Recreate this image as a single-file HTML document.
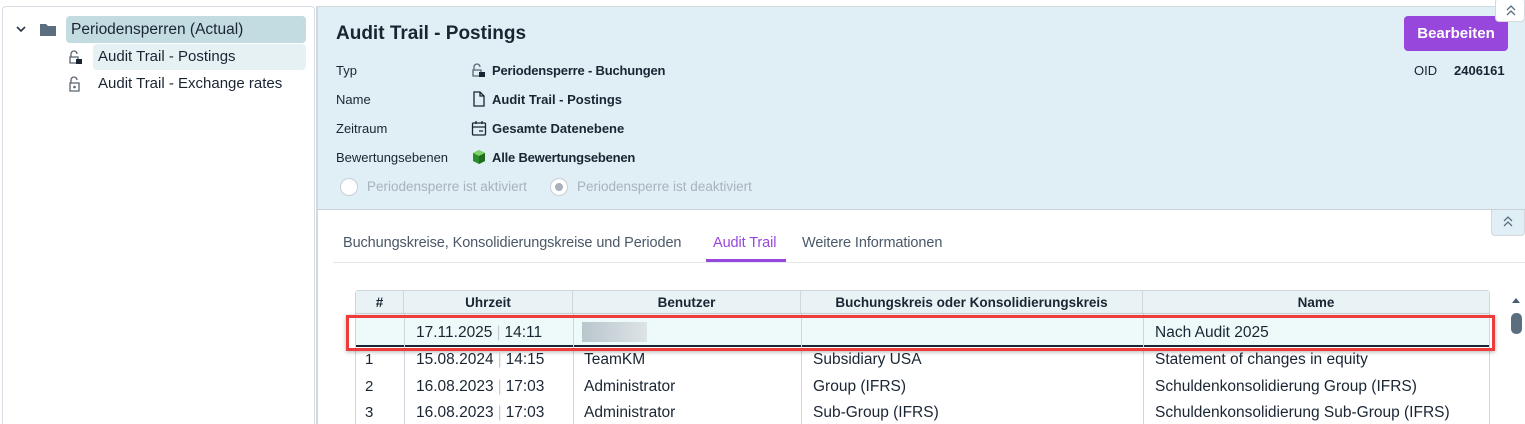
<!DOCTYPE html><html><head><meta charset="utf-8"><style>
*{box-sizing:border-box;margin:0;padding:0}
html,body{width:1525px;height:424px;overflow:hidden}
body{background:#fff;font-family:"Liberation Sans",sans-serif;color:#1a2533;position:relative}
.a{position:absolute;white-space:nowrap}
.b{font-weight:bold}
.lbl{font-size:13px;color:#1a2533}
.val{font-size:13px;font-weight:bold}
.th{position:absolute;top:291px;height:23px;font-size:13.5px;font-weight:bold;text-align:center;line-height:23px;border-right:1px solid #cfd6de}
.td{position:absolute;font-size:15px}
.sep{color:#c8ccd2;margin:0 4px}
</style></head><body>
<div class="a" style="left:2px;top:6px;width:313px;height:430px;border:1px solid #d8dde4;border-radius:4px"></div>
<svg class="a" style="left:15px;top:24px" width="12" height="10"><path d="M2 3l4 4 4-4" stroke="#2a3745" stroke-width="1.6" fill="none"/></svg>
<svg class="a" style="left:40px;top:22px" width="16" height="14"><path d="M0 2h6l2 2h8v10H0z" fill="#5a6e80"/></svg>
<div class="a" style="left:66px;top:16px;width:240px;height:27px;background:#c2dce2;border-radius:4px"></div>
<div class="a" style="left:71px;top:21px;font-size:15.5px">Periodensperren (Actual)</div>
<div class="a" style="left:93px;top:44px;width:213px;height:26px;background:#e6f1f4;border-radius:4px"></div>
<svg class="a" style="left:68px;top:49px" width="16" height="16"><path d="M3 8V5a3 3 0 0 1 6 0M2 8h8v6H2z" stroke="#5a6370" fill="none" stroke-width="1.3"/><rect x="8" y="10" width="6" height="5" fill="#1a2533"/></svg>
<div class="a" style="left:98px;top:48px;font-size:15px">Audit Trail - Postings</div>
<svg class="a" style="left:68px;top:76px" width="16" height="16"><path d="M3 7V4a3 3 0 0 1 6 0M2 7h9v8H2z" stroke="#5a6370" fill="none" stroke-width="1.3"/><circle cx="6.5" cy="11" r="1.3" fill="#5a6370"/></svg>
<div class="a" style="left:98px;top:75px;font-size:15px">Audit Trail - Exchange rates</div>
<div class="a" style="left:316px;top:6px;width:2px;height:420px;background:#d3d7de"></div>
<div class="a" style="left:318px;top:6px;width:1207px;height:204px;background:#e0eff5;border-top:1px solid #d3d7de;border-bottom:1px solid #c9d0d8"></div>
<div class="a b" style="left:336px;top:23px;font-size:19px">Audit Trail - Postings</div>
<div class="a" style="left:1404px;top:16px;width:104px;height:35px;background:#9747dc;border-radius:4px;color:#fff;font-weight:bold;font-size:15px;text-align:center;line-height:35px">Bearbeiten</div>
<div class="a" style="left:1495px;top:-2px;width:30px;height:24px;background:#fff;border:1px solid #d3d7de;border-radius:4px"></div>
<svg class="a" style="left:1505px;top:4px" width="12" height="12"><path d="M2 6l4-4 4 4M2 11l4-4 4 4" stroke="#5a6e80" stroke-width="1.3" fill="none"/></svg>
<div class="a lbl" style="left:1414px;top:63px">OID</div>
<div class="a val" style="left:1454px;top:63px">2406161</div>
<div class="a lbl" style="left:336px;top:63px">Typ</div>
<div class="a lbl" style="left:336px;top:92px">Name</div>
<div class="a lbl" style="left:336px;top:121px">Zeitraum</div>
<div class="a lbl" style="left:336px;top:150px">Bewertungsebenen</div>
<svg class="a" style="left:471px;top:62px" width="16" height="16"><path d="M3 8V5a3 3 0 0 1 6 0M2 8h8v6H2z" stroke="#5a6370" fill="none" stroke-width="1.3"/><rect x="8" y="10" width="6" height="5" fill="#1a2533"/></svg>
<div class="a val" style="left:492px;top:63px;letter-spacing:-0.2px">Periodensperre - Buchungen</div>
<svg class="a" style="left:472px;top:91px" width="14" height="16"><path d="M2 1h6l4 4v10H2z M8 1v4h4" stroke="#1a2533" fill="none" stroke-width="1.3"/></svg>
<div class="a val" style="left:492px;top:92px">Audit Trail - Postings</div>
<svg class="a" style="left:471px;top:120px" width="16" height="16"><rect x="1.5" y="3" width="13" height="12" rx="1" stroke="#1a2533" fill="none" stroke-width="1.3"/><path d="M1.5 7h13M5 1v3M11 1v3M8 11h4" stroke="#1a2533" stroke-width="1.3"/></svg>
<div class="a val" style="left:492px;top:121px">Gesamte Datenebene</div>
<svg class="a" style="left:471px;top:149px" width="16" height="16"><path d="M8 1l6 3v8l-6 3-6-3V4z" fill="#2e8b2e"/><path d="M8 7l6-3-6-3-6 3z" fill="#7fd36a"/><path d="M8 7v8l6-3V4z" fill="#1f6e1f"/></svg>
<div class="a val" style="left:492px;top:150px;letter-spacing:-0.2px">Alle Bewertungsebenen</div>
<div class="a" style="left:340px;top:178px;width:18px;height:18px;border:1px solid #c9ced6;border-radius:50%;background:#fff"></div>
<div class="a" style="left:367px;top:179px;font-size:13.5px;color:#a9b1bd">Periodensperre ist aktiviert</div>
<div class="a" style="left:550px;top:178px;width:18px;height:18px;border:1px solid #c9ced6;border-radius:50%;background:#fff"></div>
<div class="a" style="left:555px;top:183px;width:8px;height:8px;border-radius:50%;background:#a9b1bd"></div>
<div class="a" style="left:577px;top:179px;font-size:13.5px;color:#a9b1bd">Periodensperre ist deaktiviert</div>
<div class="a" style="left:1491px;top:210px;width:34px;height:26px;background:#e0eff5;border:1px solid #d3d7de;border-top:none;border-radius:0 0 4px 4px"></div>
<svg class="a" style="left:1502px;top:215px" width="12" height="12"><path d="M2 6l4-4 4 4M2 11l4-4 4 4" stroke="#5a6e80" stroke-width="1.3" fill="none"/></svg>
<div class="a" style="left:343px;top:235px;font-size:14.5px;color:#4a5868;letter-spacing:-0.1px">Buchungskreise, Konsolidierungskreise und Perioden</div>
<div class="a" style="left:713px;top:235px;font-size:14.5px;color:#9747dc;letter-spacing:-0.1px">Audit Trail</div>
<div class="a" style="left:706px;top:259px;width:80px;height:3px;background:#9747dc"></div>
<div class="a" style="left:802px;top:235px;font-size:14.5px;color:#4a5868;letter-spacing:-0.1px">Weitere Informationen</div>
<div class="a" style="left:333px;top:262px;width:1192px;height:1px;background:#e6e8ec"></div>
<div class="a" style="left:355px;top:290px;width:1135px;height:140px;border:1px solid #cfd6de;border-radius:3px 3px 0 0"></div>
<div class="a" style="left:356px;top:291px;width:1133px;height:23px;background:#e9f3f6;border-bottom:1px solid #cfd6de"></div>
<div class="th" style="left:356px;width:48px">#</div>
<div class="th" style="left:404px;width:169px">Uhrzeit</div>
<div class="th" style="left:573px;width:228px">Benutzer</div>
<div class="th" style="left:801px;width:342px">Buchungskreis oder Konsolidierungskreis</div>
<div class="th" style="left:1143px;width:346px;border-right:none">Name</div>
<div class="a" style="left:356px;top:315px;width:1133px;height:30px;background:#eefafa"></div>
<div class="a" style="left:356px;top:345px;width:1133px;height:1.5px;background:#1a2533"></div>
<div class="a" style="left:404px;top:314px;width:1px;height:110px;background:#cfd6de"></div>
<div class="a" style="left:573px;top:314px;width:1px;height:110px;background:#cfd6de"></div>
<div class="a" style="left:801px;top:314px;width:1px;height:110px;background:#cfd6de"></div>
<div class="a" style="left:1143px;top:314px;width:1px;height:110px;background:#cfd6de"></div>
<div class="a" style="left:582px;top:322px;width:65px;height:20px;background:linear-gradient(90deg,#b9c6cc,#dde4e7)"></div>
<div class="a" style="left:346px;top:315px;width:1149px;height:36px;border:3px solid #ee3b3b;box-shadow:0 1px 4px rgba(0,0,0,.3)"></div>
<div class="td a" style="left:416px;top:324px;font-size:15.5px">17.11.2025<span class="sep">|</span>14:11</div>
<div class="td a" style="left:1155px;top:324px;font-size:15.5px">Nach Audit 2025</div>
<div class="td a" style="left:365px;top:351px">1</div><div class="td a" style="left:416px;top:351px;font-size:15.5px">15.08.2024<span class="sep">|</span>14:15</div><div class="td a" style="left:584px;top:351px;font-size:15.5px">TeamKM</div><div class="td a" style="left:813px;top:351px;font-size:15.5px">Subsidiary USA</div><div class="td a" style="left:1155px;top:351px;font-size:15.5px">Statement of changes in equity</div>
<div class="td a" style="left:365px;top:378px">2</div><div class="td a" style="left:416px;top:378px;font-size:15.5px">16.08.2023<span class="sep">|</span>17:03</div><div class="td a" style="left:584px;top:378px;font-size:15.5px">Administrator</div><div class="td a" style="left:813px;top:378px;font-size:15.5px">Group (IFRS)</div><div class="td a" style="left:1155px;top:378px;font-size:15.5px">Schuldenkonsolidierung Group (IFRS)</div>
<div class="td a" style="left:365px;top:404px">3</div><div class="td a" style="left:416px;top:404px;font-size:15.5px">16.08.2023<span class="sep">|</span>17:03</div><div class="td a" style="left:584px;top:404px;font-size:15.5px">Administrator</div><div class="td a" style="left:813px;top:404px;font-size:15.5px">Sub-Group (IFRS)</div><div class="td a" style="left:1155px;top:404px;font-size:15.5px">Schuldenkonsolidierung Sub-Group (IFRS)</div>
<svg class="a" style="left:1511px;top:296px" width="10" height="8"><path d="M1 7l4-5 4 5z" fill="#4a5e70"/></svg>
<div class="a" style="left:1511px;top:313px;width:11px;height:21px;background:#5a6e80;border-radius:5px"></div>
</body></html>
